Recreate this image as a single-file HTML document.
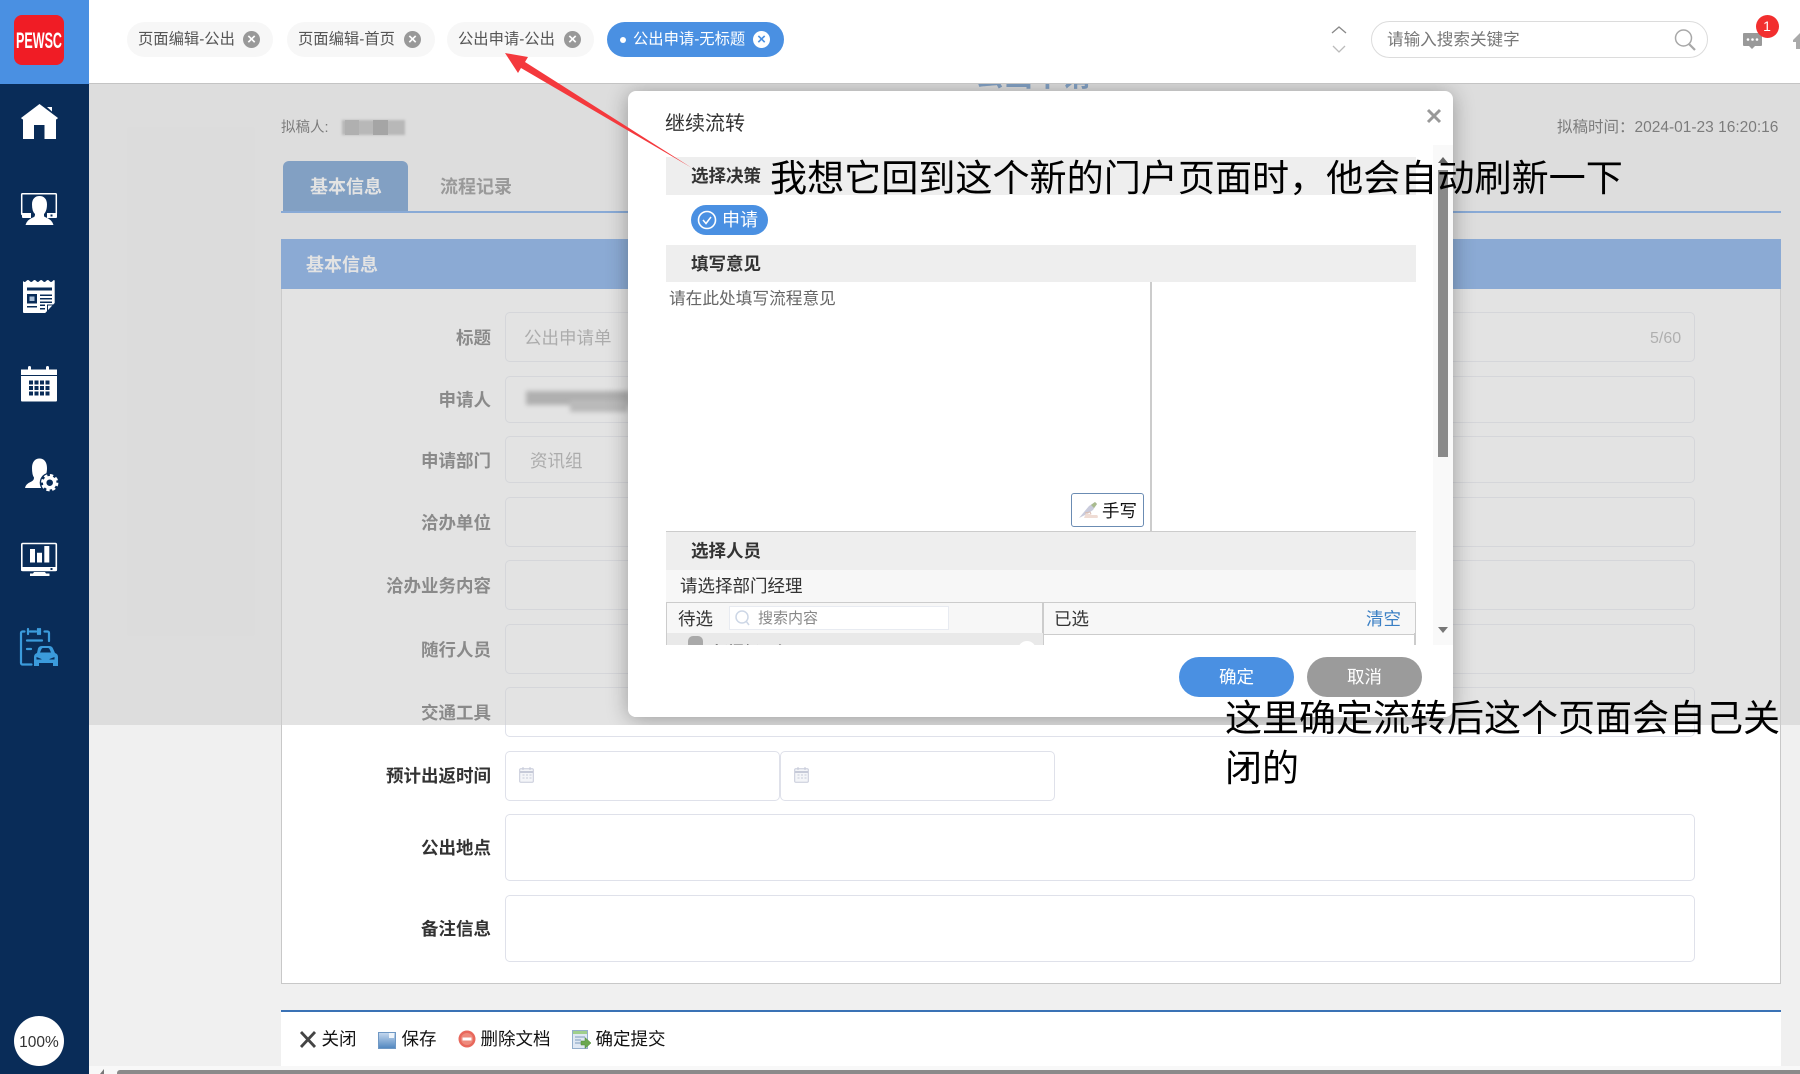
<!DOCTYPE html>
<html lang="zh-CN">
<head>
<meta charset="utf-8">
<title>公出申请</title>
<style>
html,body{margin:0;padding:0;width:1800px;height:1074px;overflow:hidden;background:#f0f0f0}
body{position:relative;font-family:"Liberation Sans","Noto Sans CJK SC",sans-serif;color:#333}
.a{position:absolute;white-space:nowrap;box-sizing:border-box}
.t{position:absolute;white-space:nowrap;line-height:30px;height:30px;margin-top:1px}
.tab{position:absolute;top:22px;height:35px;border-radius:18px;background:#f7f7f7;color:#555;font-size:15.3px;line-height:35px;box-sizing:border-box;padding-left:11px;white-space:nowrap}
.tab i{position:absolute;right:13px;top:9px;width:17px;height:17px;border-radius:50%;background:#999;color:#fff;font:bold 15px/17px "Liberation Sans",sans-serif;text-align:center}
.lb{position:absolute;right:1309px;font-size:17.5px;font-weight:700;color:#333;line-height:30px;white-space:nowrap;margin-top:1px}
.in{position:absolute;left:505px;width:1190px;background:#fff;border:1.5px solid #dfe1ea;border-radius:5px;box-sizing:border-box}
.band{position:absolute;left:38px;width:750px;background:#eee;font-size:17.5px;font-weight:700;color:#333;box-sizing:border-box;padding-left:25px;white-space:nowrap}
</style>
</head>
<body>

<!-- title fragment behind header -->
<div class="t" style="left:975px;top:61px;font-size:29px;font-weight:700;color:#2265b5;line-height:30px">公出申请</div>

<!-- top meta -->
<div class="t" style="left:281px;top:112px;font-size:14.5px;color:#111">拟稿人:</div>
<div class="a" style="left:342px;top:120px;width:63px;height:15px;background:#9c9c9c;filter:blur(1px)"></div>
<div class="a" style="left:345px;top:120px;width:14px;height:15px;background:#8a8a8a"></div>
<div class="a" style="left:373px;top:120px;width:15px;height:15px;background:#707070"></div>
<div class="t" style="left:1557px;top:112px;font-size:15.5px;color:#111">拟稿时间：2024-01-23 16:20:16</div>

<!-- tabs -->
<div class="a" style="left:283px;top:161px;width:125px;height:50px;background:#2265b5;border-radius:6px 6px 0 0;color:#fff;font-size:18px;font-weight:700;line-height:52px;padding-left:27px">基本信息</div>
<div class="t" style="left:440px;top:171px;font-size:18px;font-weight:700;color:#555">流程记录</div>
<div class="a" style="left:281px;top:211px;width:1500px;height:2px;background:#327ce1"></div>

<!-- panel -->
<div class="a" style="left:281px;top:239px;width:1500px;height:745px;background:#fff;border:1px solid #c8c8c8;border-top:0;border-width:0 1.5px 1.5px 1.5px"></div>
<div class="a" style="left:281px;top:239px;width:1500px;height:50px;background:#357cdc;color:#fff;font-size:18px;font-weight:700;line-height:52px;padding-left:25px">基本信息</div>

<div class="lb" style="top:322px">标题</div><div class="in" style="top:312px;height:50px"></div>
<div class="t" style="left:524px;top:322px;font-size:17.5px;color:#808080">公出申请单</div>
<div class="t" style="left:1650px;top:323px;font-size:16px;color:#888">5/60</div>
<div class="lb" style="top:384px">申请人</div><div class="in" style="top:376px;height:47px"></div>
<div class="a" style="left:526px;top:391px;width:104px;height:14px;background:#8a8a8a;filter:blur(2.5px)"></div>
<div class="a" style="left:570px;top:400px;width:58px;height:12px;background:#a0a0a0;filter:blur(2.5px)"></div>
<div class="lb" style="top:445px">申请部门</div><div class="in" style="top:436px;height:47px"></div>
<div class="t" style="left:530px;top:445px;font-size:17.5px;color:#808080">资讯组</div>
<div class="lb" style="top:507px">洽办单位</div><div class="in" style="top:497px;height:50px"></div>
<div class="lb" style="top:570px">洽办业务内容</div><div class="in" style="top:560px;height:50px"></div>
<div class="lb" style="top:634px">随行人员</div><div class="in" style="top:624px;height:50px"></div>
<div class="lb" style="top:697px">交通工具</div><div class="in" style="top:687px;height:50px"></div>
<div class="lb" style="top:760px">预计出返时间</div>
<div class="in" style="top:751px;height:50px;width:275px"></div>
<div class="in" style="top:751px;height:50px;left:780px;width:275px"></div>
<svg class="a" style="left:519px;top:766px" width="15" height="17" viewBox="0 0 15 17"><rect x=".7" y="2.7" width="13.6" height="13.6" rx="1" fill="#f4f5f8" stroke="#c6cad8"/><path d="M1 6h13" stroke="#c6cad8" stroke-width="2"/><path d="M4 1v3M11 1v3" stroke="#c6cad8"/><path d="M3.5 9h2m1.5 0h2m1.5 0h2M3.5 12h2m1.5 0h2m1.5 0h2" stroke="#c6cad8"/></svg>
<svg class="a" style="left:794px;top:766px" width="15" height="17" viewBox="0 0 15 17"><rect x=".7" y="2.7" width="13.6" height="13.6" rx="1" fill="#f4f5f8" stroke="#c6cad8"/><path d="M1 6h13" stroke="#c6cad8" stroke-width="2"/><path d="M4 1v3M11 1v3" stroke="#c6cad8"/><path d="M3.5 9h2m1.5 0h2m1.5 0h2M3.5 12h2m1.5 0h2m1.5 0h2" stroke="#c6cad8"/></svg>
<div class="lb" style="top:832px">公出地点</div><div class="in" style="top:814px;height:67px"></div>
<div class="lb" style="top:913px">备注信息</div><div class="in" style="top:895px;height:67px"></div>

<!-- bottom toolbar -->
<div class="a" style="left:281px;top:1010px;width:1500px;height:56px;background:#fff;border-top:2px solid #3a72b5"></div>
<svg class="a" style="left:298px;top:1029px" width="20" height="20" viewBox="0 0 20 20"><path d="M3 3l14 15M17 3L3 18" stroke="#444" stroke-width="2.8" fill="none"/></svg>
<div class="t" style="left:321.5px;top:1023px;font-size:17.5px;color:#111">关闭</div>
<svg class="a" style="left:378px;top:1032px" width="18" height="17" viewBox="0 0 18 17"><defs><linearGradient id="g1" x1="0" y1="0" x2="0" y2="1"><stop offset="0" stop-color="#c6d9ef"/><stop offset="1" stop-color="#4f86bf"/></linearGradient></defs><rect x=".5" y=".5" width="17" height="16" fill="url(#g1)" stroke="#6f98c4"/><rect x="11" y="1" width="5" height="5" fill="#eef4fa"/></svg>
<div class="t" style="left:401.5px;top:1023px;font-size:17.5px;color:#111">保存</div>
<svg class="a" style="left:458px;top:1030px" width="18" height="18" viewBox="0 0 18 18"><circle cx="9" cy="9" r="8.5" fill="#e8685c"/><circle cx="9" cy="9" r="6" fill="#ee8a7c"/><rect x="4.5" y="7.5" width="9" height="3" fill="#fff"/></svg>
<div class="t" style="left:480.5px;top:1023px;font-size:17.5px;color:#111">删除文档</div>
<svg class="a" style="left:572px;top:1030px" width="20" height="20" viewBox="0 0 20 20"><rect x=".5" y=".5" width="15" height="18" fill="#dfe8f3" stroke="#93aecb"/><rect x="1" y="1" width="14" height="3" fill="#9fcf8c"/><path d="M3 7h10M3 10h6M3 13h6" stroke="#7d9bbd"/><path d="M9 11h4V7.500l6 5.500-6 5.500V15H9z" fill="#6aa84f" stroke="#4f8a3a" stroke-width=".5"/></svg>
<div class="t" style="left:595.5px;top:1023px;font-size:17.5px;color:#111">确定提交</div>

<!-- bottom scroll -->
<div class="a" style="left:89px;top:1066px;width:1711px;height:8px;background:#f8f8f8"></div>
<div class="a" style="left:117px;top:1070px;width:1683px;height:4px;background:#8a8a8a;border-radius:3px 0 0 0"></div>
<svg class="a" style="left:99px;top:1069px" width="8" height="5"><path d="M5 0v5H1z" fill="#777"/></svg>

<!-- overlay + dialog -->
<div class="a" style="left:89px;top:84px;width:1711px;height:641px;background:rgba(205,205,205,.564);overflow:hidden">
  <div class="a" style="left:539px;top:7px;width:825px;height:626px;background:#fff;border-radius:8px;box-shadow:0 2px 22px rgba(0,0,0,.32)">
    <div class="t" style="left:37px;top:17px;font-size:20px;color:#333">继续流转</div>
    <svg class="a" style="left:798px;top:17px" width="16" height="16"><path d="M2 2l12 12M14 2L2 14" stroke="#999" stroke-width="3"/></svg>
    <div class="a" style="left:805px;top:54px;width:20px;height:500px;background:#f9f9f9"></div>
    <div class="a" style="left:810px;top:79px;width:10px;height:287px;background:#8a8a8a"></div>
    <svg class="a" style="left:809px;top:65px" width="12" height="8"><path d="M6 1l5 6H1z" fill="#666"/></svg>
    <svg class="a" style="left:809px;top:535px" width="12" height="8"><path d="M1 1h10L6 7z" fill="#777"/></svg>

    <div class="band" style="top:66px;height:38px;line-height:39px">选择决策</div>
    <div class="a" style="left:63px;top:114px;width:77px;height:30px;background:#4a90e2;border-radius:15px;color:#fff;font-size:18px;line-height:31px;padding-left:31px">申请</div>
    <svg class="a" style="left:69px;top:119px" width="20" height="20"><circle cx="10" cy="10" r="8.5" fill="none" stroke="#fff" stroke-width="1.6"/><path d="M6 10l3 3.500 5-6.500" fill="none" stroke="#fff" stroke-width="1.5"/></svg>
    <div class="band" style="top:154px;height:37px;line-height:39px">填写意见</div>
    <div class="t" style="left:41px;top:192px;font-size:16.7px;color:#666">请在此处填写流程意见</div>
    <div class="a" style="left:522px;top:191px;width:2px;height:249px;background:#ccc"></div>
    <div class="a" style="left:443px;top:402px;width:73px;height:34px;background:#fff;border:1px solid #6b8cb3;border-radius:3px;font-size:17.5px;line-height:34px;padding-left:30px;color:#111">手写</div>
    <svg class="a" style="left:450px;top:410px" width="21" height="18" viewBox="0 0 21 18"><path d="M1 17L11 5l6-4 2 2-4 6-6 4z" fill="#c9cbdc"/><path d="M13 4l4-3 2 2-3 4z" fill="#a9bb8e"/><path d="M6 17l2-5 4 1 2 1h5q1.500 1 .5 3z" fill="#efdcd4"/><path d="M7 12l5-1 1 2" fill="none" stroke="#d8bdb3"/></svg>

    <div class="band" style="top:440px;height:39px;line-height:39px;border-top:1.5px solid #ccc">选择人员</div>
    <div class="a" style="left:38px;top:479px;width:750px;height:32px;background:#f7f7f7;font-size:17.5px;line-height:33px;padding-left:14px;color:#333">请选择部门经理</div>
    <!-- table head -->
    <div class="a" style="left:38px;top:511px;width:750px;height:33px;background:#f7f7f7;border:1.5px solid #ccc"></div>
    <div class="a" style="left:414px;top:511px;width:1.5px;height:44px;background:#ccc"></div>
    <div class="t" style="left:50px;top:512px;font-size:17.5px;color:#333">待选</div>
    <div class="a" style="left:101px;top:515px;width:220px;height:24px;background:#fff;border:1.5px solid #e8ebf1"></div>
    <svg class="a" style="left:106px;top:517px" width="18" height="20"><circle cx="8" cy="9" r="6" fill="none" stroke="#cdd7e6" stroke-width="1.5"/><path d="M12 13l3 4" stroke="#cdd7e6" stroke-width="1.5"/></svg>
    <div class="t" style="left:130px;top:512px;font-size:15px;color:#888">搜索内容</div>
    <div class="t" style="left:426px;top:512px;font-size:17.5px;color:#333">已选</div>
    <div class="t" style="left:738px;top:512px;font-size:17.5px;color:#3a7fc4">清空</div>
    <!-- clipped row -->
    <div class="a" style="left:38px;top:542px;width:377px;height:12px;background:#e9e9e9;overflow:hidden;border-left:1.5px solid #ccc">
      <div class="a" style="left:21px;top:3px;width:15px;height:18px;background:#a9a9a9;border-radius:5px 5px 0 0"></div>
      <div class="t" style="left:45px;top:5px;font-size:16px;font-weight:700;color:#444">部门经理组</div>
      <div class="a" style="left:351px;top:8px;width:18px;height:18px;border-radius:50%;background:#fff"></div>
    </div>
    <div class="a" style="left:786px;top:542px;width:1.5px;height:12px;background:#ccc"></div>
    <!-- clip bottom -->
    <div class="a" style="left:0;top:554px;width:825px;height:72px;background:#fff;border-radius:0 0 8px 8px"></div>
    <div class="a" style="left:551px;top:566px;width:115px;height:40px;background:#4a90e2;border-radius:20px;color:#fff;font-size:17.5px;line-height:41px;text-align:center">确定</div>
    <div class="a" style="left:679px;top:566px;width:115px;height:40px;background:#9b9b9b;border-radius:20px;color:#fff;font-size:17.5px;line-height:41px;text-align:center">取消</div>
  </div>
</div>

<!-- header -->
<div class="a" style="left:89px;top:0;width:1711px;height:84px;background:#fff;border-bottom:1.5px solid #c4c4c4"></div>
<div class="tab" style="left:127px;width:146px">页面编辑-公出<i>×</i></div>
<div class="tab" style="left:287px;width:148px">页面编辑-首页<i style="right:14px">×</i></div>
<div class="tab" style="left:447px;width:147px">公出申请-公出<i>×</i></div>
<div class="tab" style="left:607px;width:177px;background:#4a90e2;color:#fff;padding-left:26px">公出申请-无标题<i style="background:#fff;color:#4a90e2;right:14px">×</i></div>
<div class="a" style="left:620px;top:37px;width:6px;height:6px;border-radius:50%;background:#fff"></div>

<svg class="a" style="left:1330px;top:24px" width="18" height="32"><path d="M2 9l7-6 7 6" fill="none" stroke="#888" stroke-width="1.3"/><path d="M3 22l6 6 6-6" fill="none" stroke="#bbb" stroke-width="1.3"/></svg>
<div class="a" style="left:1371px;top:21px;width:337px;height:37px;border:1px solid #dcdcdc;border-radius:19px;background:#fff"></div>
<div class="t" style="left:1387px;top:24px;font-size:16.6px;color:#777">请输入搜索关键字</div>
<svg class="a" style="left:1672px;top:26px" width="26" height="26"><circle cx="11.5" cy="12" r="8" fill="none" stroke="#a8a8a8" stroke-width="1.5"/><path d="M17 18l6 6" stroke="#a8a8a8" stroke-width="2.2"/></svg>
<svg class="a" style="left:1742px;top:32px" width="21" height="18"><path d="M2 1h17a1 1 0 0 1 1 1v11a1 1 0 0 1-1 1h-6l-3 3-3-3H2a1 1 0 0 1-1-1V2a1 1 0 0 1 1-1z" fill="#999"/><circle cx="6" cy="7.5" r="1.3" fill="#fff"/><circle cx="10.5" cy="7.5" r="1.3" fill="#fff"/><circle cx="15" cy="7.5" r="1.3" fill="#fff"/></svg>
<div class="a" style="left:1755.5px;top:14.5px;width:23px;height:23px;border-radius:50%;background:#f22f2f;color:#fff;font-size:14px;line-height:23px;text-align:center">1</div>
<svg class="a" style="left:1792px;top:32px" width="8" height="18"><path d="M1 8L8 1v16H4V10H1z" fill="#aaa"/></svg>

<!-- sidebar -->
<div class="a" style="left:0;top:0;width:89px;height:1074px;background:#092c58"></div>
<div class="a" style="left:0;top:0;width:89px;height:84px;background:#4a90e2"></div>
<div class="a" style="left:14px;top:15px;width:50px;height:50px;background:#f01c25;border-radius:8px"></div>
<svg class="a" style="left:14px;top:15px" width="50" height="50"><text x="2" y="33" font-family="Liberation Sans" font-weight="700" font-size="22" fill="#fff" textLength="46" lengthAdjust="spacingAndGlyphs">PEWSC</text></svg>

<svg class="a" style="left:0;top:0" width="89" height="700" viewBox="0 0 89 700">
  <!-- home -->
  <path fill="#fff" d="M39.5 104L58 118l-1.5 1.5-.5-.5v20H44.500v-14H34v14H23v-20l-.5.5L21 118z"/>
  <path fill="#fff" d="M47 107h5v4.500z"/>
  <!-- monitor person -->
  <path fill="none" stroke="#fff" stroke-width="1.5" d="M24 214.500h-1.500a.8.8 0 0 1-.8-.8V194.500a.8.8 0 0 1 .8-.8h33a.8.8 0 0 1 .8.8V214a.8.8 0 0 1-.8.8H54"/>
  <path fill="#fff" d="M22 213h9v5h-8a1 1 0 0 1-1-1zM47 213h10v4a1 1 0 0 1-1 1H47z"/>
  <rect x="50.5" y="214.5" width="2" height="2" fill="#092c58"/>
  <path fill="#fff" d="M25.5 225q1.500-5.500 8.500-8 1-.5 1-3-3-2.500-3-9.500c0-5.500 3-8.500 7.500-8.500s7.500 3 7.500 8.500c0 7-3 9.500-3 9.500 0 2.500 0 2.500 1 3q7 2.500 8.500 8z"/>
  <!-- newspaper -->
  <path fill="#fff" d="M23 281q1.600 2 3.300 0t3.300 0 3.300 0 3.300 0 3.300 0 3.300 0 3.300 0 3.300 0 3.300 0 2 0V303l-9.500 10H24a1 1 0 0 1-1-1z"/>
  <path fill="#092c58" d="M27 287.500h25v3H27zM27 294h10v9.500H27zM40 294.500h12v1.500H40zM40 298h12v1.500H40zM40 301.500h12v1.500H40zM27 306h10v1.500H27zM40 304.500h5v1.500h-5zM40 308h5v1.500h-5zM47 313v-8.500h8.500l-1 1H48v7z"/>
  <rect x="29.5" y="296.500" width="5" height="4.500" fill="#a9bed6"/>
  <!-- calendar -->
  <path fill="#fff" d="M21 369.500h7v-2a1.500 1.500 0 0 1 3 0v2h15v-2a1.500 1.500 0 0 1 3 0v2h8v5.500H21z"/>
  <path fill="#fff" d="M21 376h36v24.500a1 1 0 0 1-1 1H22a1 1 0 0 1-1-1z"/>
  <g fill="#092c58"><rect x="29" y="380.500" width="4" height="4"/><rect x="34.5" y="380.5" width="4" height="4"/><rect x="40" y="380.5" width="4" height="4"/><rect x="45.5" y="380.5" width="4" height="4"/><rect x="29" y="386" width="4" height="4"/><rect x="34.5" y="386" width="4" height="4"/><rect x="40" y="386" width="4" height="4"/><rect x="45.5" y="386" width="4" height="4"/><rect x="29" y="391.5" width="4" height="4"/><rect x="34.5" y="391.5" width="4" height="4"/><rect x="40" y="391.5" width="4" height="4"/><rect x="45.5" y="391.5" width="4" height="4"/></g>
  <!-- user gear -->
  <path fill="#fff" d="M25 488q.5-4 6.500-6.500 2.500-1.200 2.500-4-2-2.500-2-9.500c0-6 3-9.500 7.500-9.500s7.500 3.500 7.500 9.500c0 3.500-.5 5-1 6.500L41 488z"/>
  <circle cx="49.7" cy="482.7" r="10" fill="#092c58"/>
  <circle cx="49.7" cy="482.7" r="5" fill="none" stroke="#fff" stroke-width="3.5"/>
  <circle cx="49.7" cy="482.7" r="7.2" fill="none" stroke="#fff" stroke-width="3" stroke-dasharray="3.2 2.45"/>
  <!-- chart monitor -->
  <rect x="21.8" y="543.5" width="34.5" height="27" rx="1" fill="none" stroke="#fff" stroke-width="1.6"/>
  <path fill="#fff" d="M21 567h36v3a1 1 0 0 1-1 1H22a1 1 0 0 1-1-1zM30 549h5v13.500h-5zM37 552.700h5v9.800h-5zM44.300 546h5v16.500h-5zM34 572h11l1 1.500h3.500v2.500H30v-2.500h3z"/>
  <rect x="50.5" y="568" width="2" height="2" fill="#092c58"/>
  <!-- car clipboard -->
  <g fill="none" stroke="#3b9bdc" stroke-width="2.2" stroke-linecap="round">
    <path d="M24.500 631.500h-2a1.500 1.500 0 0 0-1.500 1.500v30a1.500 1.500 0 0 0 1.500 1.500h9"/>
    <path d="M44.500 631.500h3a1.500 1.500 0 0 1 1.500 1.500v8"/>
    <path d="M28 629v5M38 629v5M30 631.500h6M27 640.500h15M27 649h4"/>
    <path d="M40 629v5"/>
  </g>
  <path fill="#3b9bdc" d="M38 648.500q1-2.500 4-2.500h7q3 0 4 2.500l2 4.500q3 1 3 4v9h-5v-3H39v3h-5v-9q0-3 3-4zM40 652.500h11l-1.500-3.500q-.5-1-1.500-1h-5q-1 0-1.500 1zM36.500 657v2.500h5V659zM49.500 659v.5h5V657z"/>
</svg>

<div class="a" style="left:14px;top:1016px;width:50px;height:50px;border-radius:50%;background:#fff;color:#333;font-size:15.5px;line-height:53px;text-align:center">100%</div>

<!-- annotation -->
<svg class="a" style="left:0;top:0" width="800" height="200"><polygon points="505,53 528,57 525,62 692,168 521,68 518,73" fill="#f4393d"/></svg>
<div class="a" style="left:770px;top:153px;font-size:37.1px;line-height:50px;color:#000">我想它回到这个新的门户页面时，他会自动刷新一下</div>
<div class="a" style="left:1225px;top:694px;font-size:37px;line-height:50px;color:#000">这里确定流转后这个页面会自己关<br>闭的</div>

</body>
</html>
